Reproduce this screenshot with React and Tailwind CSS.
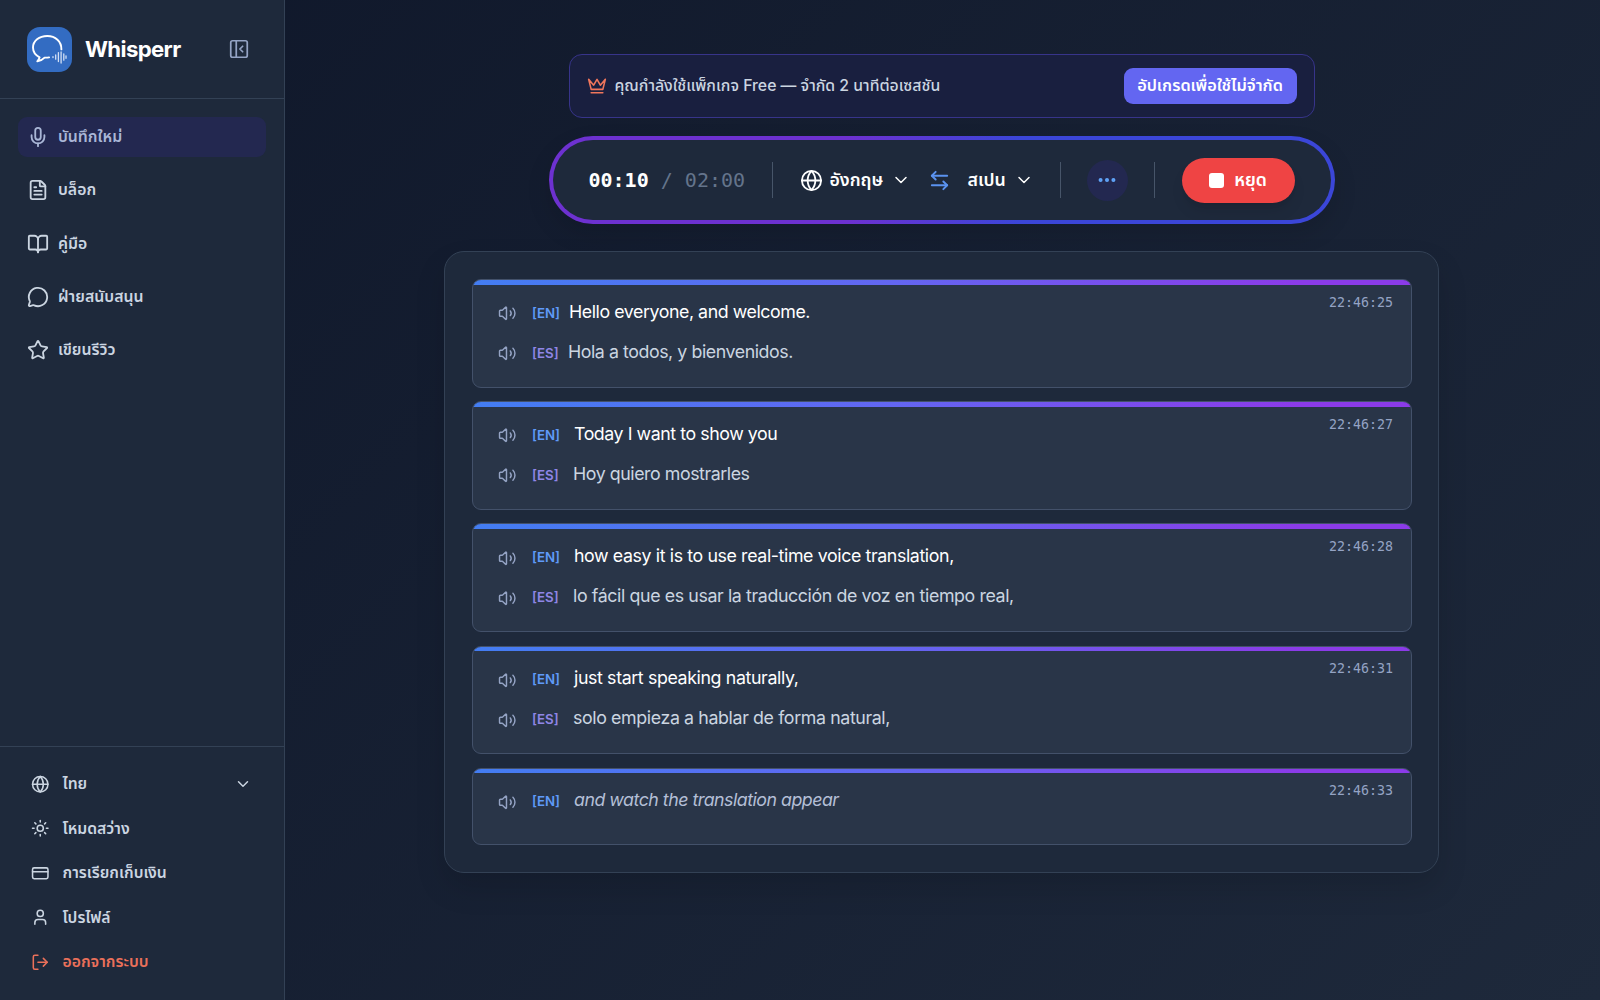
import React from "react";
import {
  Mic, FileText, BookOpen, MessageCircle, Star, Globe, Sun, CreditCard, User,
  LogOut, ChevronDown, PanelLeftClose, ArrowLeftRight, Volume2, Ellipsis,
} from "lucide-react";

const NAV = [
  { icon: Mic, label: "บันทึกใหม่", active: true },
  { icon: FileText, label: "บล็อก" },
  { icon: BookOpen, label: "คู่มือ" },
  { icon: MessageCircle, label: "ฝ่ายสนับสนุน" },
  { icon: Star, label: "เขียนรีวิว" },
];

const FOOTER = [
  { icon: Globe, label: "ไทย", chevron: true },
  { icon: Sun, label: "โหมดสว่าง" },
  { icon: CreditCard, label: "การเรียกเก็บเงิน" },
  { icon: User, label: "โปรไฟล์" },
  { icon: LogOut, label: "ออกจากระบบ", danger: true },
];

const LINES = [
  { time: "22:46:25", en: "Hello everyone, and welcome.", es: "Hola a todos, y bienvenidos.", first: true, track: "tracking-[-0.44px]" },
  { time: "22:46:27", en: "Today I want to show you", es: "Hoy quiero mostrarles", track: "tracking-[-0.44px]" },
  { time: "22:46:28", en: "how easy it is to use real-time voice translation,", es: "lo fácil que es usar la traducción de voz en tiempo real,", track: "tracking-[-0.39px]" },
  { time: "22:46:31", en: "just start speaking naturally,", es: "solo empieza a hablar de forma natural,", track: "tracking-[-0.38px]" },
  { time: "22:46:33", en: "and watch the translation appear", pending: true, track: "tracking-[-0.5px]" },
];

function Logo() {
  return (
    <div className="size-[45px] shrink-0 rounded-[13px] bg-[#336cc2]">
      <svg viewBox="0 0 45 45" className="size-full" fill="none" stroke="#fff" strokeLinecap="round">
        <path d="M34.400 22.400c.2-8-6-13.400-14.100-13.400C12 9 6 14 6 20.600c0 4.600 2.700 7.800 6.600 9.700-.3 1.400-1.200 2.700-2.300 4 2.800-.4 5.600-1.900 7.300-3.700 1.500.1 3 0 4.500-.2" strokeWidth="1.900" strokeLinejoin="round" />
        <path d="M26 29.600v1M28.700 27.900v4.300M31.400 25.600v9M34.100 25v11M36.800 27v6.200M39 28.800v2.500" strokeWidth="1.300" stroke="#d3e0f5" />
      </svg>
    </div>
  );
}

function Crown() {
  return (
    <svg viewBox="0 0 24 24" className="size-5 shrink-0 text-[#f0765c]" fill="none" stroke="currentColor" strokeWidth="1.900" strokeLinecap="round" strokeLinejoin="round">
      <path d="m2 4 3 12h14l3-12-6 7-4-7-4 7-6-7zm3 16h14" />
    </svg>
  );
}

function Sidebar() {
  return (
    <aside className="flex h-full w-[285px] shrink-0 flex-col border-r border-[#334155] bg-[#1e293b]">
      <div className="flex h-[99px] shrink-0 items-center border-b border-[#334155] pl-[27px] pr-[34px]">
        <Logo />
        <span className="ml-[13px] text-[22.200px] font-bold tracking-[-0.65px] text-white">Whisperr</span>
        <PanelLeftClose className="ml-auto size-[22px] text-[#94a3c4]" strokeWidth={1.9} />
      </div>
      <nav className="flex flex-1 flex-col gap-[13.300px] px-[18px] pt-[18px]">
        {NAV.map(({ icon: Icon, label, active }) => (
          <div
            key={label}
            className={
              "flex h-10 items-center gap-[9px] rounded-[9px] pl-[9px] text-[15.800px] font-semibold " +
              (active ? "bg-[#232850] text-[#a9b6d6]" : "text-[#cbd5e1]")
            }
          >
            <Icon className="size-[22px]" strokeWidth={2} />
            <span>{label}</span>
          </div>
        ))}
      </nav>
      <div className="flex h-[254px] shrink-0 flex-col border-t border-[#334155] pl-[31px] pr-[32px] pt-[15px]">
        {FOOTER.map(({ icon: Icon, label, chevron, danger }) => (
          <div
            key={label}
            className={
              "flex h-[44.400px] items-center gap-[13px] text-[15.700px] font-semibold " +
              (danger ? "text-[#ea705a]" : "text-[#cbd5e1]")
            }
          >
            <Icon className="size-[18.500px]" strokeWidth={2} />
            <span>{label}</span>
            {chevron && <ChevronDown className="ml-auto size-[18px]" />}
          </div>
        ))}
      </div>
    </aside>
  );
}

function Banner() {
  return (
    <div className="flex h-[64px] w-[746px] items-center rounded-[13px] border border-[#37348a] bg-[#191f3f] pl-[17px] pr-[17px]">
      <Crown />
      <span className="ml-[8px] text-[15.800px] font-medium text-[#cbd5e1]">คุณกำลังใช้แพ็กเกจ Free — จำกัด 2 นาทีต่อเซสชัน</span>
      <button className="ml-auto h-9 w-[173px] whitespace-nowrap rounded-[9px] bg-[#6366f1] pb-px text-[16.300px] font-semibold text-white">
        อัปเกรดเพื่อใช้ไม่จำกัด
      </button>
    </div>
  );
}

function Controls() {
  return (
    <div className="mt-[18px] h-[88px] w-[786px] rounded-full bg-[linear-gradient(90deg,#6d31d0_0%,#6d31d0_38%,#3b46d8_60%,#3b46d8_100%)] p-1 shadow-[0_10px_25px_rgba(0,0,0,0.12)]">
      <div className="flex h-full items-center rounded-full bg-[#1e293b] pl-9 pr-9 text-white">
        <div className="w-[157px] whitespace-pre font-['DejaVu_Sans_Mono',monospace] text-[20px] text-[#64748b]">
          <span className="font-bold text-white">00:10</span>
          <span> / 02:00</span>
        </div>
        <div className="ml-[26px] h-9 w-px bg-[#475569]" />
        <Globe className="ml-[27px] size-[23px]" strokeWidth={1.9} />
        <span className="ml-[7px] w-[54px] text-[17.700px] font-semibold">อังกฤษ</span>
        <ChevronDown className="ml-[7px] size-[20px]" strokeWidth={1.8} />
        <ArrowLeftRight className="ml-[17px] size-[23px] text-[#5b93f0]" strokeWidth={2} />
        <span className="ml-[17px] w-[40px] text-[17.700px] font-semibold">สเปน</span>
        <ChevronDown className="ml-[6px] size-[20px]" strokeWidth={1.8} />
        <div className="ml-[26px] h-9 w-px bg-[#475569]" />
        <div className="ml-[26px] grid size-[41px] place-items-center rounded-full bg-[#232850] text-[#60a5fa]">
          <Ellipsis className="size-[22px]" strokeWidth={2.400} />
        </div>
        <div className="ml-[26px] h-9 w-px bg-[#475569]" />
        <button className="ml-auto flex h-[45px] w-[113px] items-center justify-center gap-[10px] rounded-full bg-[#ef4444] text-[17.700px] font-semibold shadow-lg">
          <span className="size-[15px] rounded-[3px] bg-white" />
          หยุด
        </button>
      </div>
    </div>
  );
}

function Entry({ time, en, es, first, pending, track }) {
  const gap = first ? "ml-[7px] " : "ml-[12px] ";
  return (
    <div className={"flex overflow-hidden rounded-[9px] border border-[#43516a] bg-[#293548] " + (pending ? "h-[77px]" : "h-[108.500px]")}>
      <div className="flex w-full flex-col">
        <div className="h-[4.500px] w-full shrink-0 bg-[linear-gradient(90deg,#437df2,#6366f1_45%,#8b3be8_88%)]" />
        <div className="flex justify-between pl-[24.500px] pr-[18px]">
          <div className="flex flex-col pt-[7.500px]">
            <div className="flex h-10 items-center">
              <Volume2 className="mt-[3px] size-[18.500px] text-[#94a3c4]" strokeWidth={1.9} />
              <span className="ml-[16px] mt-[3px] w-[30px] text-[13.300px] font-semibold text-[#5f9af8]">[EN]</span>
              <span className={gap + "text-[17.800px] " + track + (pending ? " italic text-[#b4bfd6]" : " text-white")}>{en}</span>
            </div>
            {es && (
              <div className="flex h-10 items-center">
                <Volume2 className="mt-[3px] size-[18.500px] text-[#94a3c4]" strokeWidth={1.9} />
                <span className="ml-[16px] mt-[3px] w-[29px] text-[13.300px] font-semibold text-[#8f86e6]">[ES]</span>
                <span className={gap + "text-[17.800px] text-[#cbd5e1] " + track}>{es}</span>
              </div>
            )}
          </div>
          <span className="pt-[8px] font-['DejaVu_Sans_Mono',monospace] text-[13.300px] text-[#94a3c4]">{time}</span>
        </div>
      </div>
    </div>
  );
}

export default function App() {
  return (
    <div className="flex h-[1000px] w-[1600px] overflow-hidden bg-[linear-gradient(135deg,#0f172a,#1e293b)] font-['Inter','Noto_Sans_Thai',sans-serif]">
      <Sidebar />
      <main className="flex flex-1 flex-col items-center pr-[2px] pt-[54px]">
        <Banner />
        <Controls />
        <section className="mt-[27px] flex h-[622px] w-[995px] flex-col gap-[13.700px] rounded-[20px] border border-[#334155] bg-[#1e293b] pl-[27px] pr-[26px] pt-[27px] shadow-[0_15px_30px_rgba(0,0,0,0.13)]">
          {LINES.map((line) => (
            <Entry key={line.time} {...line} />
          ))}
        </section>
      </main>
    </div>
  );
}
